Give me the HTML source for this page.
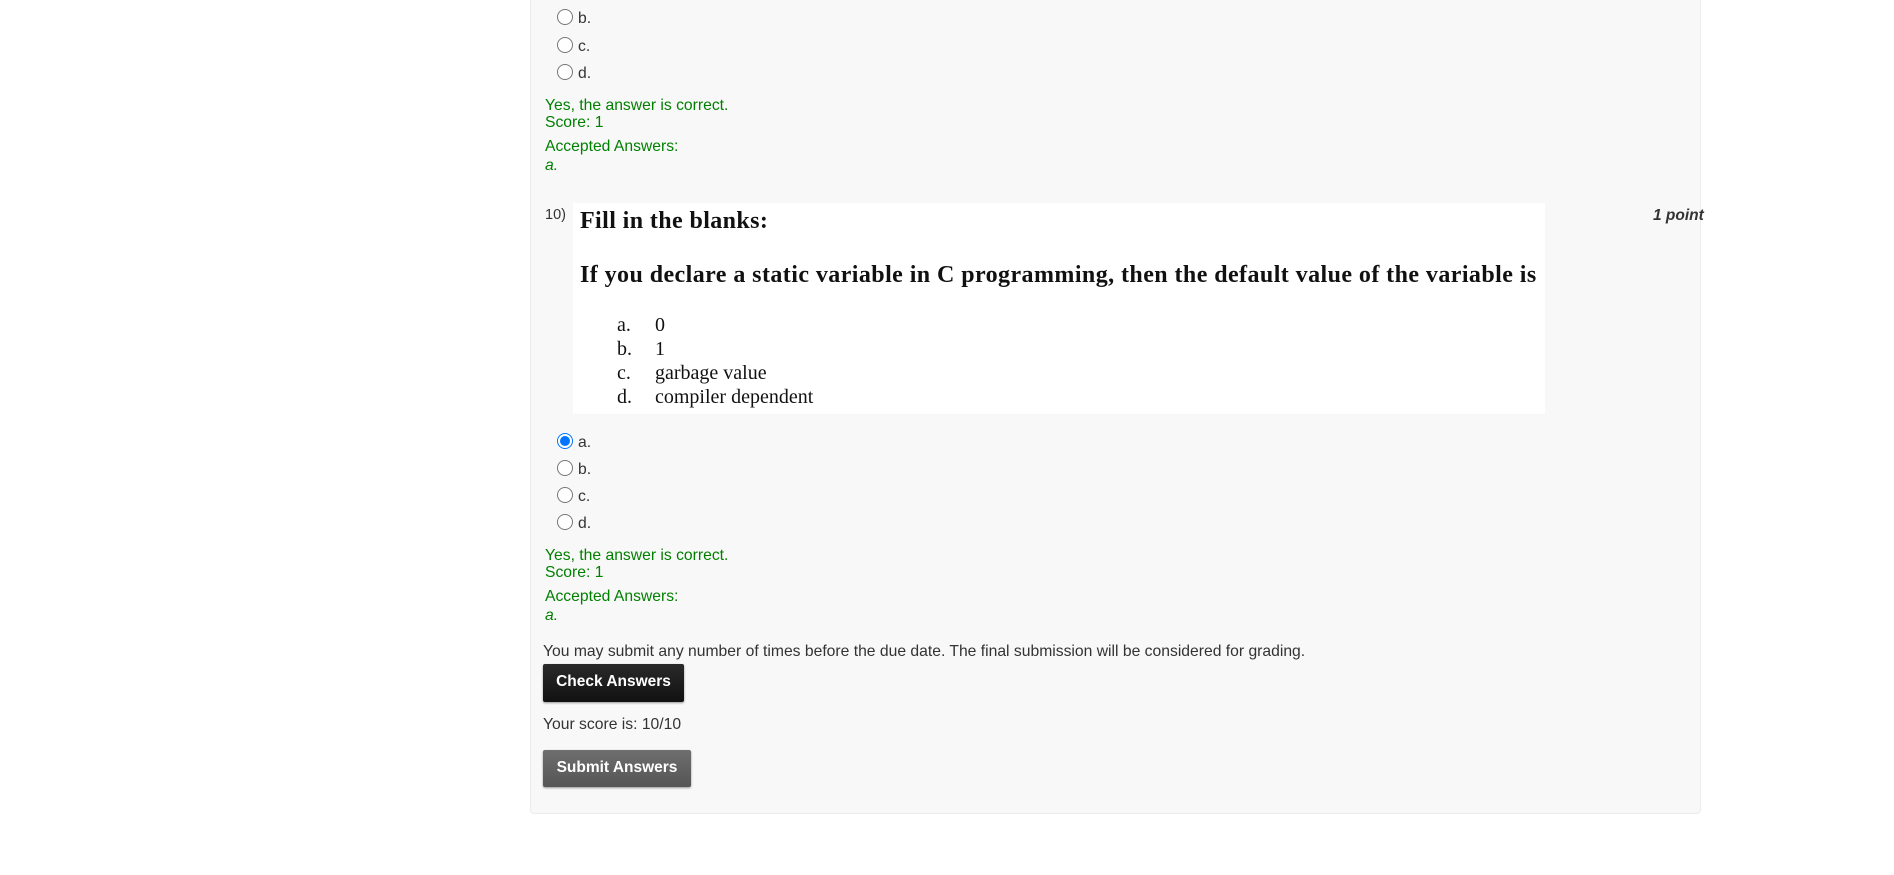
<!DOCTYPE html>
<html><head><meta charset="utf-8"><style>
html,body{margin:0;padding:0;background:#fff;width:1894px;height:875px;overflow:hidden;font-family:"Liberation Sans",Arial,sans-serif;}
.card{position:absolute;left:530px;top:-10px;width:1169px;height:822px;background:#f8f8f8;border:1px solid #ececec;border-radius:4px;}
.a{position:absolute;white-space:nowrap;}
.r{position:absolute;width:14px;height:14px;border:1px solid #767676;border-radius:50%;background:#fff;}
.r.on{border:1px solid #0075ff;}
.r.on::after{content:"";position:absolute;left:2px;top:2px;width:10px;height:10px;border-radius:50%;background:#0075ff;}
.lbl{position:absolute;font-size:15.7px;color:#333;}
.g{position:absolute;font-size:15.7px;color:#008000;line-height:16px;white-space:nowrap;}
.img{position:absolute;left:573px;top:203px;width:972px;height:211px;background:#fff;font-family:"Liberation Serif","Times New Roman",serif;color:#111;}
.btn{position:absolute;color:#fff;font-weight:bold;font-size:15.5px;text-align:center;border-radius:2px;box-shadow:0 1px 2px rgba(0,0,0,.4);}
</style></head><body>
<div class="card"></div>

<div class="r" style="left:557px;top:9px"></div><div class="lbl" style="left:578px;top:10px">b.</div>
<div class="r" style="left:557px;top:37px"></div><div class="lbl" style="left:578px;top:38px">c.</div>
<div class="r" style="left:557px;top:64px"></div><div class="lbl" style="left:578px;top:65px">d.</div>

<div class="g" style="left:545px;top:98px">Yes, the answer is correct.</div>
<div class="g" style="left:545px;top:115px">Score: 1</div>
<div class="g" style="left:545px;top:139px">Accepted Answers:</div>
<div class="g" style="left:545px;top:158px;font-style:italic">a.</div>

<div class="a" style="left:545px;top:207px;font-size:14.5px;color:#333">10)</div>
<div class="a" style="left:1653px;top:207px;font-size:15.5px;color:#333;font-style:italic;font-weight:bold">1 point</div>

<div class="img">
 <div class="a" style="left:7px;top:5px;font-size:24px;font-weight:bold;letter-spacing:0.4px">Fill in the blanks:</div>
 <div class="a" style="left:7px;top:59px;font-size:24px;font-weight:bold;letter-spacing:0.43px">If you declare a static variable in C programming, then the default value of the variable is</div>
 <div class="a" style="left:44px;top:110px;font-size:20px;line-height:24px">a.<br>b.<br>c.<br>d.</div>
 <div class="a" style="left:82px;top:110px;font-size:20px;line-height:24px">0<br>1<br>garbage value<br>compiler dependent</div>
</div>

<div class="r on" style="left:557px;top:433px"></div><div class="lbl" style="left:578px;top:434px">a.</div>
<div class="r" style="left:557px;top:460px"></div><div class="lbl" style="left:578px;top:461px">b.</div>
<div class="r" style="left:557px;top:487px"></div><div class="lbl" style="left:578px;top:488px">c.</div>
<div class="r" style="left:557px;top:514px"></div><div class="lbl" style="left:578px;top:515px">d.</div>

<div class="g" style="left:545px;top:548px">Yes, the answer is correct.</div>
<div class="g" style="left:545px;top:565px">Score: 1</div>
<div class="g" style="left:545px;top:589px">Accepted Answers:</div>
<div class="g" style="left:545px;top:608px;font-style:italic">a.</div>

<div class="a" style="left:543px;top:643px;font-size:15.7px;color:#333">You may submit any number of times before the due date. The final submission will be considered for grading.</div>
<div class="btn" style="left:543px;top:664px;width:141px;height:38px;line-height:36px;background:linear-gradient(#2a2a2a,#111)">Check Answers</div>
<div class="a" style="left:543px;top:716px;font-size:15.7px;color:#333">Your score is: 10/10</div>
<div class="btn" style="left:543px;top:750px;width:148px;height:37px;line-height:36px;background:linear-gradient(#6e6e6e,#555)">Submit Answers</div>
</body></html>
